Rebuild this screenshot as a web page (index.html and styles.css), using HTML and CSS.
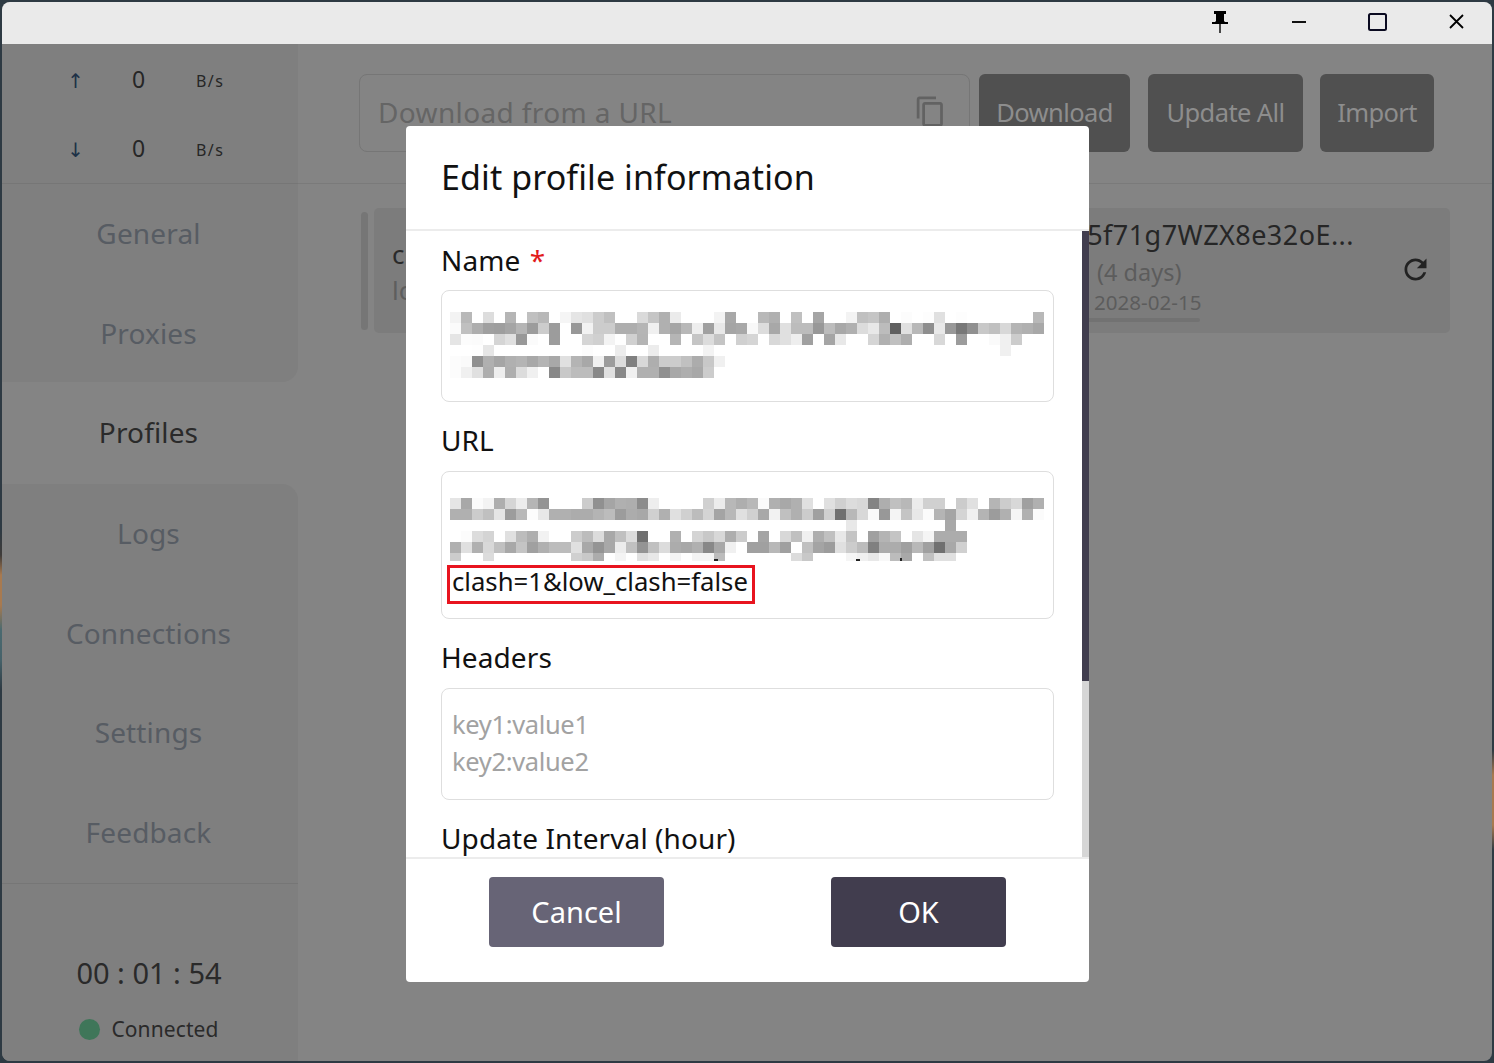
FILE: index.html
```html
<!DOCTYPE html>
<html lang="en">
<head>
<meta charset="utf-8">
<title>Clash profiles</title>
<link rel="stylesheet" href="styles.css">
</head>
<body>
<div class="window">
  <header class="titlebar">
    <svg class="tb-icon pin" viewBox="0 0 16 22"><path d="M2 0h12v3h-2v7l1 1h3v2H0v-2h3l1-1V3H2zM7.3 13h1.4v9H7.3z"/></svg>
    <svg class="tb-icon min" viewBox="0 0 14 2"><path d="M0 0h14v2H0z"/></svg>
    <svg class="tb-icon max" viewBox="0 0 19 18"><rect x="1" y="1" width="17" height="16" rx="1.5"/></svg>
    <svg class="tb-icon close" viewBox="0 0 15 15"><path d="M1 1l13 13M14 1L1 14"/></svg>
  </header>
  <div class="app">
    <aside class="sidebar">
      <div class="stats">
        <div class="stat"><span class="arrow">↑</span><span class="num">0</span><span class="unit">B/s</span></div>
        <div class="stat"><span class="arrow">↓</span><span class="num">0</span><span class="unit">B/s</span></div>
      </div>
      <nav class="nav">
        <div class="nav-group group-top">
          <a class="nav-item">General</a>
          <a class="nav-item">Proxies</a>
        </div>
        <a class="nav-item active">Profiles</a>
        <div class="nav-group group-bottom">
          <a class="nav-item">Logs</a>
          <a class="nav-item">Connections</a>
          <a class="nav-item">Settings</a>
          <a class="nav-item">Feedback</a>
        </div>
      </nav>
      <div class="side-foot">
        <div class="timer">00 : 01 : 54</div>
        <div class="status"><span class="dot"></span><span>Connected</span></div>
      </div>
    </aside>
    <main class="main">
      <div class="toolbar">
        <div class="url-box">
          <span class="url-ph">Download from a URL</span>
          <svg class="copy" viewBox="0 0 24 24"><path d="M16 1H4c-1.1 0-2 .9-2 2v14h2V3h12V1zm3 4H8c-1.1 0-2 .9-2 2v14c0 1.1.9 2 2 2h11c1.1 0 2-.9 2-2V7c0-1.1-.9-2-2-2zm0 16H8V7h11v14z"/></svg>
        </div>
        <button class="tool-btn btn-dl">Download</button>
        <button class="tool-btn btn-up">Update All</button>
        <button class="tool-btn btn-im">Import</button>
      </div>
      <div class="list">
        <div class="thumb"></div>
        <div class="card">
          <div class="card-left">
            <div class="c-title">clash</div>
            <div class="c-sub">local</div>
          </div>
          <div class="card-right">
            <div class="c-name">t5f71g7WZX8e32oE...</div>
            <div class="c-days">(4 days)</div>
            <div class="c-date">2028-02-15</div>
            <div class="c-bar"></div>
          </div>
          <svg class="refresh" viewBox="0 0 24 24"><path d="M17.65 6.35C16.2 4.9 14.21 4 12 4c-4.42 0-7.99 3.58-7.99 8s3.57 8 7.99 8c3.73 0 6.84-2.55 7.73-6h-2.08c-.82 2.33-3.04 4-5.65 4-3.31 0-6-2.69-6-6s2.69-6 6-6c1.66 0 3.14.69 4.22 1.78L13 11h7V4l-2.35 2.35z"/></svg>
        </div>
      </div>
    </main>
  </div>
  <div class="overlay">
    <section class="modal">
      <h2 class="modal-title">Edit profile information</h2>
      <div class="modal-body">
        <label class="field-label">Name <span class="req">*</span></label>
        <div class="box box-name"><svg class="mosaic" data-m="name"></svg></div>
        <label class="field-label">URL</label>
        <div class="box box-url">
          <svg class="mosaic" data-m="url"></svg>
          <div class="marked">clash=1&amp;low_clash=false</div>
        </div>
        <label class="field-label">Headers</label>
        <div class="box box-head"><div class="ph">key1:value1</div><div class="ph">key2:value2</div></div>
        <label class="field-label">Update Interval (hour)</label>
        <div class="scroll"><div class="scroll-thumb"></div></div>
      </div>
      <div class="modal-foot">
        <button class="m-btn cancel">Cancel</button>
        <button class="m-btn ok">OK</button>
      </div>
    </section>
  </div>
</div>
<script src="script.js"></script>
</body>
</html>
```
FILE: styles.css
```css
* { box-sizing: border-box; }
html, body { margin: 0; height: 100%; }
body {
  background:
    linear-gradient(#2e3a43 0 530px, #3f3c3a 555px, #a87a50 575px, #a87a50 605px, #4a6a70 630px, #46626a 660px, #2e3a43 690px) left top / 2px 100% no-repeat,
    linear-gradient(#2e3a43 0 750px, #a87a50 775px, #a87a50 825px, #2e3a43 850px) right top / 2px 100% no-repeat,
    #2e3a43;
  padding: 2px;
  font-family: "Noto Sans", "Open Sans", sans-serif;
  overflow: hidden;
}
.window {
  position: relative;
  width: 1490px;
  height: 1059px;
  border-radius: 8px;
  overflow: hidden;
  display: flex;
  flex-direction: column;
  background: #848484;
}
.titlebar {
  height: 42px;
  flex: none;
  background: #eaeaea;
  position: relative;
}
.tb-icon { position: absolute; display: block; }
.pin { left: 1210px; top: 9px; width: 16px; height: 22px; }
.pin path { fill: #000; }
.min { left: 1290px; top: 19px; width: 14px; height: 2px; }
.min path { fill: #111; }
.max { left: 1366px; top: 11px; width: 19px; height: 18px; }
.max rect { fill: none; stroke: #0a0a20; stroke-width: 2; }
.close { left: 1447px; top: 12px; width: 15px; height: 15px; }
.close path { fill: none; stroke: #000; stroke-width: 1.8; }

.app { flex: 1; display: flex; min-height: 0; }
.sidebar { width: 296px; flex: none; display: flex; flex-direction: column; }
.stats {
  height: 140px;
  background: #7f7f7f;
  border-bottom: 1px solid #767676;
  padding-top: 1px;
}
.stat {
  height: 69px;
  display: grid;
  grid-template-columns: 82px 96px 1fr;
  align-items: center;
  padding-top: 2px;
  color: #262626;
}
.arrow { text-align: right; font-size: 20px; color: #1d3147; font-family: "DejaVu Sans", sans-serif; }
.num { text-align: center; font-size: 23px; padding-left: 13px; position: relative; bottom: 2px; }
.unit { font-size: 16px; letter-spacing: 1.4px; padding-left: 16px; }
.nav { display: flex; flex-direction: column; height: 699px; flex: none; }
.nav-group { background: #7f7f7f; display: flex; flex-direction: column; flex: none; }
.group-top { height: 198px; border-bottom-right-radius: 16px; }
.group-bottom { height: 399px; border-top-right-radius: 16px; }
.nav-item {
  height: 100px;
  flex: none;
  display: flex;
  align-items: center;
  justify-content: center;
  padding: 0 3px 2px 0;
  font-size: 28px;
  letter-spacing: .15px;
  color: #575c63;
}
.group-bottom .nav-item { height: 99.75px; }
.nav-item.active { height: 102px; color: #2a2a2a; background: #848484; }
.side-foot {
  flex: 1;
  background: #7f7f7f;
  border-top: 1px solid #767676;
  padding: 70px 2px 0 0;
  display: flex;
  flex-direction: column;
  align-items: center;
}
.timer { font-size: 29px; line-height: 38px; color: #2a2a2a; }
.status {
  margin-top: 22px;
  display: flex;
  align-items: center;
  gap: 11px;
  font-size: 21px;
  letter-spacing: .1px;
  line-height: 30px;
  color: #2a2a2a;
}
.dot { width: 21px; height: 21px; border-radius: 50%; background: #3f7659; }

.main { flex: 1; min-width: 0; display: flex; flex-direction: column; }
.toolbar {
  height: 140px;
  border-bottom: 1px solid #7a7a7a;
  padding: 30px 58px 0 61px;
  display: flex;
  align-items: flex-start;
}
.url-box {
  width: 611px;
  height: 78px;
  border: 1px solid #767676;
  border-radius: 8px;
  padding: 0 18px;
  display: flex;
  align-items: flex-end;
  position: relative;
}
.url-ph { font-size: 28px; letter-spacing: .37px; line-height: 38px; color: #656565; margin-bottom: 20px; }
.copy { position: absolute; right: 22px; top: 20px; width: 33px; height: 33px; fill: #626262; }
.tool-btn {
  height: 78px;
  border: 0;
  border-radius: 6px;
  background: #505050;
  color: #8d8d8d;
  font: 400 25.5px/38px "Noto Sans", sans-serif;
  letter-spacing: -.6px;
  padding: 0 0 2px;
}
.btn-dl { width: 151px; margin-left: 9px; }
.btn-up { width: 155px; margin-left: 18px; }
.btn-im { width: 114px; margin-left: 17px; }

.list { padding: 24px 42px 0 63px; display: flex; gap: 6px; align-items: flex-start; }
.thumb { width: 7px; height: 118px; margin-top: 4px; background: #767676; border-radius: 4px; }
.card {
  flex: 1;
  height: 125px;
  background: #7c7c7c;
  border-radius: 5px;
  display: flex;
  position: relative;
  padding-left: 18px;
}
.card-left { width: 685px; padding-top: 28px; font-size: 26px; line-height: 36px; color: #2a2a2a; }
.c-sub { color: #5e5e5e; }
.card-right { position: relative; padding-top: 8px; }
.c-name { font-size: 27px; line-height: 38px; color: #262626; letter-spacing: .45px; white-space: nowrap; }
.c-days { font-size: 23.5px; line-height: 36px; color: #5c5c5c; padding-left: 20px; }
.c-date { font-size: 20.6px; line-height: 28px; color: #5c5c5c; padding-left: 17px; margin-top: -2px; }
.c-bar { width: 123px; height: 4px; background: #727272; border-radius: 2px; margin-top: 2px; }
.refresh { position: absolute; right: 18px; top: 45px; width: 33px; height: 33px; fill: #222; }

.overlay {
  position: absolute;
  inset: 42px 0 0 0;
  padding: 3px 0 0 1px;
  display: flex;
  align-items: center;
  justify-content: center;
}
.modal {
  width: 683px;
  height: 856px;
  background: #fff;
  border-radius: 4px;
  display: flex;
  flex-direction: column;
  overflow: hidden;
}
.modal-title {
  margin: 0;
  height: 105px;
  flex: none;
  border-bottom: 2px solid #ececec;
  padding: 28px 0 0 35px;
  font-size: 34px;
  letter-spacing: .1px;
  font-weight: 400;
  line-height: 46px;
  color: #111;
}
.modal-body {
  position: relative;
  flex: 1;
  min-height: 0;
  overflow: hidden;
  padding: 10px 35px 0;
}
.field-label { display: block; height: 40px; font-size: 28px; letter-spacing: .1px; line-height: 38px; color: #111; margin-bottom: 10px; }
.field-label:first-child { margin-bottom: 9px; }
.req { color: #e21b1b; margin-left: 2px; }
.box { border: 1px solid #dedede; border-radius: 8px; margin-bottom: 19px; overflow: hidden; }
.box-name { height: 112px; padding: 21px 0 0 8px; }
.box-url { height: 148px; padding: 26px 0 0 8px; }
.box-head { height: 112px; padding: 17px 0 0 10px; }
.ph { font-size: 25.5px; letter-spacing: -.35px; line-height: 37px; color: #a2a2a2; }
.mosaic { display: block; width: 594px; shape-rendering: crispEdges; }
.mosaic-mark { fill: #222; }
.marked {
  display: inline-block;
  height: 39px;
  margin: 4px 0 0 -3px;
  padding: 0 4px 0 2px;
  border: 3px solid #e8141f;
  font-size: 25.7px;
  line-height: 28px;
  color: #111;
  white-space: nowrap;
}
.scroll { position: absolute; right: 0; top: 0; bottom: 0; width: 7px; background: #d6d6d6; }
.scroll-thumb { height: 450px; background: #413d4e; }
.modal-foot {
  height: 125px;
  flex: none;
  border-top: 2px solid #ececec;
  padding: 18px 0 0 83px;
  display: flex;
  align-items: flex-start;
  gap: 167px;
}
.m-btn {
  width: 175px;
  height: 70px;
  border: 0;
  border-radius: 4px;
  color: #fff;
  font: 400 29px/38px "Noto Sans", sans-serif;
  padding: 0;
}
.cancel { background: #676476; }
.ok { background: #413d4e; }
```
FILE: script.js
```js
var S = 11;
var DATA = {
  name: {
    y0: 0, h: 77,
    rows: [
      "f3 b8 ff dd ff b5 ff c0 b8 ff f5 e5 e0 cc c0 ff ff da c5 b0 eb ff ff ff f3 a8 ff ff b8 b0 ff c0 ff a5 ff ff f3 c0 c5 ae ff fc ff fd e0 ff fd ff ff ff ff ff ff b8",
      "fb c0 ae a0 9e a5 b5 9c cc 9c ff 98 f2 cc cc ae ae b5 f0 b0 a5 b8 ee a0 e8 a5 a8 f8 dc a8 e0 bc bc 98 bc a8 b0 dc e8 bc 60 e0 b8 8e e8 98 78 90 c8 c0 d8 b4 b0 a8",
      "e5 fc fb ff d5 e0 98 fb ff 9c ff ff d5 d0 f3 fe d0 b4 ff ff b5 ff c5 dc c4 ff d0 d5 ff d8 e0 ee a0 ff a5 e8 ff ff d5 b0 c0 ae ff ff d8 ff 9c ff ff fa f0 cc ff ff",
      "ff ff fe e6 ff ff ff ff ff ff ff ff fc ff ff ec ff ff ec ff ff ff ff f3 ff ff ff ff ff ff ff ff ff ff ff ff ff ff ff ff ff ff ff ff ff ff ff ff ff ff f0 ff ff ff",
      "fc fa 90 b0 a5 b0 b4 a8 b4 a8 e0 b4 a8 f0 9c dc 80 d8 ae cc cc c0 ac c8 f0 ff ff",
      "fc f0 e0 ae ee ae dc f0 ff 88 c8 bc bc 88 e0 88 f0 b0 b0 90 a8 ae a8 cc ff ff ff"
    ],
    marks: []
  },
  url: {
    y0: 0, h: 63,
    rows: [
      "e5 a8 fb f3 ae d5 ec b5 94 ff ff ff cc 90 a5 b0 ae 8c ee ff ff ff ff d0 ec b8 ae b8 fa b0 a8 b0 e0 ff e0 d0 dc d8 84 ae c0 b8 ec d0 d0 ff cc e0 ff b5 cc d8 a0 b0",
      "b0 b0 cc c0 e5 9c b8 fc e8 b0 b0 ac ac b4 bc 9c ac a8 d0 b0 e0 d0 bc d4 a4 b8 e0 d0 a8 f2 c0 b0 cc a0 d0 70 b8 d8 fa 98 f4 c4 e8 fb b4 a4 d4 f0 b4 9c b0 f5 b0 fb",
      "ff ff ff ff ff ff ff ff ff ff ff ff ff ff ff ff ff ff ff ff ff ff ff ff ff ff ff ff ff ff ff ff ff ff ff ff e8 ff ff ff ff ff ff ff ff a8",
      "ff fc dc d4 ff e0 bc ae f2 ff ff cc bc dc a8 c0 dc 70 ff ff b0 ff d4 c8 d8 ae cc ff a4 ff d8 c0 f0 ae c0 e8 c4 ff a0 b4 c4 ff e5 f5 ac ac ac",
      "b0 e0 b0 d8 c0 a8 c4 a0 b0 bc bc e0 a8 94 a8 ec c0 94 c0 dc ac a8 b0 88 a8 f0 ff a0 a0 b8 a0 ff c0 a4 9c e0 cc bc 80 ac ac a0 b8 a0 70 a8 d0",
      "cc ff ff dc ff ff ff ff ff ff ff d0 c8 ac ff f4 ff e0 e8 ff f4 ff f4 f4 bc ff ff ff ff ff ff dc c8 ff ff ff f5 f0 e8 f8 bc a8 ff c0 e0 e0"
    ],
    marks: [[264, 61, 4, 2], [406, 61, 4, 2], [450, 60, 2, 3]]
  }
};
var NS = "http://www.w3.org/2000/svg";
document.querySelectorAll(".mosaic").forEach(function (svg) {
  var d = DATA[svg.getAttribute("data-m")];
  svg.setAttribute("viewBox", "0 0 594 " + d.h);
  svg.setAttribute("height", d.h);
  d.rows.forEach(function (row, r) {
    row.split(" ").forEach(function (v, c) {
      if (v === "ff") return;
      var rect = document.createElementNS(NS, "rect");
      rect.setAttribute("x", c * S);
      rect.setAttribute("y", r * S);
      rect.setAttribute("width", S);
      rect.setAttribute("height", Math.min(S, d.h - r * S));
      rect.setAttribute("fill", "#" + v + v + v);
      svg.appendChild(rect);
    });
  });
  d.marks.forEach(function (m) {
    var rect = document.createElementNS(NS, "rect");
    rect.setAttribute("class", "mosaic-mark");
    rect.setAttribute("x", m[0]);
    rect.setAttribute("y", m[1]);
    rect.setAttribute("width", m[2]);
    rect.setAttribute("height", m[3]);
    svg.appendChild(rect);
  });
});
```
